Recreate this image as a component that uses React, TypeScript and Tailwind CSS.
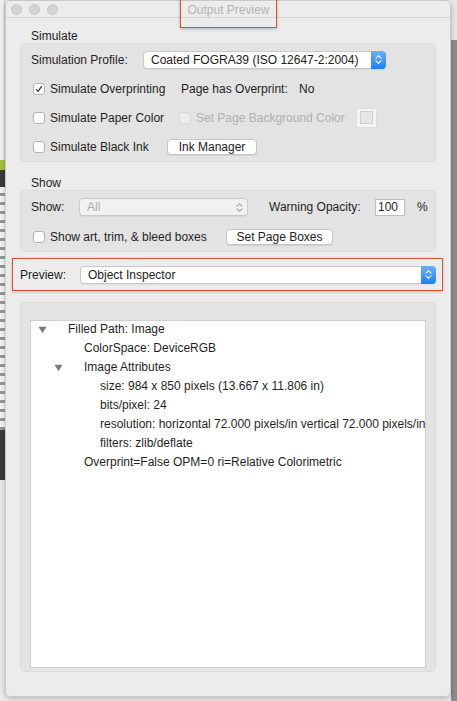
import React from 'react';

type Node = { label: string; level: number; open?: boolean };

const tree: Node[] = [
  { label: 'Filled Path: Image', level: 0, open: true },
  { label: 'ColorSpace: DeviceRGB', level: 1 },
  { label: 'Image Attributes', level: 1, open: true },
  { label: 'size: 984 x 850 pixels (13.667 x 11.806 in)', level: 2 },
  { label: 'bits/pixel: 24', level: 2 },
  { label: 'resolution: horizontal 72.000 pixels/in vertical 72.000 pixels/in', level: 2 },
  { label: 'filters: zlib/deflate', level: 2 },
  { label: 'Overprint=False OPM=0 ri=Relative Colorimetric', level: 1 },
];

const Chevrons = ({ color }: { color: string }) => (
  <svg width="7" height="11" viewBox="0 0 7 11">
    <path d="M1 4.2 L3.5 1.6 L6 4.2 M1 6.8 L3.5 9.4 L6 6.8" stroke={color} strokeWidth="1.2" fill="none" strokeLinecap="round" strokeLinejoin="round" />
  </svg>
);

const Select = ({ value, className, disabled }: { value: string; className: string; disabled?: boolean }) => (
  <div
    className={
      'h-[18px] flex items-stretch rounded-[4px] border border-[#c9c9c9] shadow-[0_1px_0_rgba(0,0,0,0.06)] ' +
      (disabled ? 'bg-[#f1f1f1] ' : 'bg-white ') +
      className
    }
  >
    <span className={'flex-1 flex items-center pl-[7px] ' + (disabled ? 'text-[#acacac]' : 'text-[#222]')}>{value}</span>
    {disabled ? (
      <div className="w-[15px] flex items-center justify-center">
        <Chevrons color="#a5a5a5" />
      </div>
    ) : (
      <div className="w-[15px] -my-px -mr-px rounded-r-[4px] bg-linear-to-b from-[#67b1fb] to-[#1c7ef8] flex items-center justify-center">
        <Chevrons color="#ffffff" />
      </div>
    )}
  </div>
);

const Check = ({ checked, disabled }: { checked?: boolean; disabled?: boolean }) => (
  <span
    className={
      'w-[12px] h-[12px] rounded-[3px] border flex items-center justify-center shrink-0 ' +
      (disabled ? 'border-[#d6d6d6] bg-[#ededed]' : 'border-[#b4b4b4] bg-white')
    }
  >
    {checked && (
      <svg width="8" height="8" viewBox="0 0 8 8">
        <path d="M1.2 4.3 L3.1 6.3 L6.8 1.2" stroke="#2a2a2a" strokeWidth="1.2" fill="none" />
      </svg>
    )}
  </span>
);

const Button = ({ label, className }: { label: string; className: string }) => (
  <div
    className={
      'h-[16px] flex items-center justify-center rounded-[4px] bg-white border border-[#c6c6c6] shadow-[0_1px_0_rgba(0,0,0,0.08)] text-[#222] ' +
      className
    }
  >
    {label}
  </div>
);

export default function App() {
  return (
    <div className="w-[457px] h-[701px] flex overflow-hidden bg-[#f2f2f2] font-['Liberation_Sans',Arial,sans-serif] text-[12px] leading-[14px] text-[#1f1f1f]">
      {/* window behind, left edge */}
      <div className="w-[5px] flex flex-col shrink-0">
        <div className="h-[160px] bg-[#f3f3f3] border-r border-[#cfcfcf]" />
        <div className="h-[10px] bg-[#a3c43c]" />
        <div className="h-[17px] bg-[#3a3a3a]" />
        <div className="h-[243px] bg-[repeating-linear-gradient(180deg,#f7f7f7_0px,#f7f7f7_6px,#9a9a9a_6px,#9a9a9a_9px)]" />
        <div className="h-[50px] bg-[#3d3d3d]" />
        <div className="flex-1 bg-[#eeeeee]" />
      </div>

      {/* Output Preview window */}
      <div className="relative w-[446px] h-[697px] shrink-0 flex flex-col bg-[#ececec] rounded-[5px] border border-[#c8c8c8] shadow-[0_2px_6px_rgba(0,0,0,0.25)]">
        <div className="h-[17px] shrink-0 flex items-center border-b border-[#d6d6d6] bg-[#ececec] rounded-t-[5px] relative">
          <div className="flex gap-[7px] pl-[5px] pt-[1px]">
            <span className="w-[11px] h-[11px] rounded-full bg-[#d3d3d3] border border-[#c6c6c6]" />
            <span className="w-[11px] h-[11px] rounded-full bg-[#d3d3d3] border border-[#c6c6c6]" />
            <span className="w-[11px] h-[11px] rounded-full bg-[#d3d3d3] border border-[#c6c6c6]" />
          </div>
          <div className="flex-1 text-center text-[#b3b3b3] pr-[51px] pt-[2px]">Output Preview</div>
        </div>
        {/* annotation box around the title */}
        <div className="absolute left-[174px] top-[-2px] w-[97px] h-[29px] border-[1.5px] border-[#d8522d] shadow-[0_1px_3px_rgba(0,0,0,0.25)]" />

        <div className="pt-[11px] pl-[25px]">Simulate</div>
        <div className="mx-[14px] h-[119px] rounded-[5px] bg-[#e3e3e3] border border-[#dcdcdc] pt-[1px] flex flex-col">
          <div className="h-[29px] flex items-center">
            <span className="w-[122px] pl-[10px]">Simulation Profile:</span>
            <Select value="Coated FOGRA39 (ISO 12647-2:2004)" className="w-[243px]" />
          </div>
          <div className="h-[29px] flex items-center">
            <div className="w-[160px] pl-[12px] flex items-center gap-[5px]">
              <Check checked />
              <span>Simulate Overprinting</span>
            </div>
            <span className="w-[118px]">Page has Overprint:</span>
            <span>No</span>
          </div>
          <div className="h-[29px] flex items-center">
            <div className="w-[158px] pl-[12px] flex items-center gap-[5px]">
              <Check />
              <span>Simulate Paper Color</span>
            </div>
            <div className="w-[177px] flex items-center gap-[5px] text-[#b0b0b0]">
              <Check disabled />
              <span>Set Page Background Color</span>
            </div>
            <div className="w-[21px] h-[20px] bg-[#f4f4f4] border border-[#dedede] flex items-center justify-center">
              <span className="w-[13px] h-[13px] bg-[#e6e6e6] border border-[#cfcfcf]" />
            </div>
          </div>
          <div className="h-[29px] flex items-center">
            <div className="w-[146px] pl-[12px] flex items-center gap-[5px]">
              <Check />
              <span>Simulate Black Ink</span>
            </div>
            <Button label="Ink Manager" className="w-[90px]" />
          </div>
        </div>

        <div className="pt-[14px] pl-[25px]">Show</div>
        <div className="mx-[14px] h-[62px] rounded-[5px] bg-[#e3e3e3] border border-[#dcdcdc] flex flex-col">
          <div className="h-[31px] flex items-center pt-[1px]">
            <span className="w-[58px] pl-[10px]">Show:</span>
            <Select value="All" className="w-[169px]" disabled />
            <span className="ml-[21px] w-[106px]">Warning Opacity:</span>
            <div className="w-[30px] h-[17px] bg-white border border-[#bdbdbd] flex items-center pl-[2px]">100</div>
            <span className="ml-[12px]">%</span>
          </div>
          <div className="h-[29px] flex items-center">
            <div className="w-[205px] pl-[12px] flex items-center gap-[5px]">
              <Check />
              <span>Show art, trim, &amp; bleed boxes</span>
            </div>
            <Button label="Set Page Boxes" className="w-[107px]" />
          </div>
        </div>

        <div className="ml-[6px] mt-[6px] w-[431px] h-[33px] border-[1.5px] border-[#d8522d] shadow-[0_1px_3px_rgba(0,0,0,0.2)] flex items-center">
          <span className="w-[67px] pl-[7px]">Preview:</span>
          <Select value="Object Inspector" className="w-[356px]" />
        </div>

        <div className="mx-[14px] mt-[11px] h-[370px] rounded-[5px] bg-[#e3e3e3] border border-[#dcdcdc] pt-[17px] pl-[9px] pr-[9px] pb-[3px] flex">
          <div className="flex-1 bg-white border border-[#cfcfcf] overflow-hidden">
            <div className="-mt-[2px]">
              {tree.map((n, i) => (
                <div key={i} className="h-[19px] flex items-center whitespace-nowrap" style={{ paddingLeft: 37 + n.level * 16 }}>
                  {n.open && (
                    <span className="relative">
                      <svg width="9" height="8" viewBox="0 0 9 8" className="absolute left-[-30px] top-[-3px]">
                        <path d="M0.5 0.8 L8.5 0.8 L4.5 7.2 Z" fill="#7b7b7b" />
                      </svg>
                    </span>
                  )}
                  <span>{n.label}</span>
                </div>
              ))}
            </div>
          </div>
        </div>
      </div>

      {/* window behind, right edge */}
      <div className="flex-1 flex flex-col">
        <div className="h-[40px] bg-[#e9e9e9]" />
        <div className="flex-1 bg-[#8d8d8d]" />
      </div>
    </div>
  );
}
